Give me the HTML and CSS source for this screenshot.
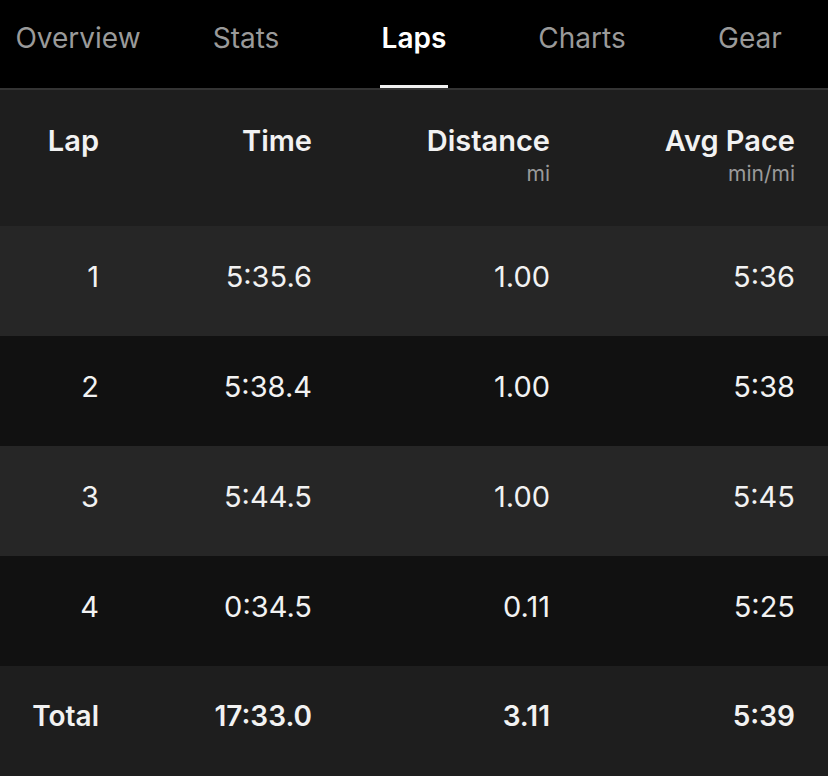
FILE: index.html
```html
<!DOCTYPE html>
<html>
<head>
<meta charset="utf-8">
<link rel="stylesheet" href="styles.css">
</head>
<body>
<nav class="tabs">
  <div class="tab">Overview</div>
  <div class="tab">Stats</div>
  <div class="tab active"><span class="tab-label">Laps</span></div>
  <div class="tab">Charts</div>
  <div class="tab">Gear</div>
</nav>
<div class="table">
  <div class="row head">
    <div class="cell"><span class="title">Lap</span></div>
    <div class="cell"><span class="title">Time</span></div>
    <div class="cell"><span class="title">Distance</span><span class="unit">mi</span></div>
    <div class="cell"><span class="title">Avg Pace</span><span class="unit">min/mi</span></div>
  </div>
  <div class="row odd">
    <div class="cell">1</div><div class="cell">5:35.6</div><div class="cell">1.00</div><div class="cell">5:36</div>
  </div>
  <div class="row even">
    <div class="cell">2</div><div class="cell">5:38.4</div><div class="cell">1.00</div><div class="cell">5:38</div>
  </div>
  <div class="row odd">
    <div class="cell">3</div><div class="cell">5:44.5</div><div class="cell">1.00</div><div class="cell">5:45</div>
  </div>
  <div class="row even">
    <div class="cell">4</div><div class="cell">0:34.5</div><div class="cell">0.11</div><div class="cell">5:25</div>
  </div>
  <div class="row total">
    <div class="cell">Total</div><div class="cell">17:33.0</div><div class="cell">3.11</div><div class="cell">5:39</div>
  </div>
</div>
</body>
</html>
```
FILE: styles.css
```css
html, body {
  margin: 0;
  padding: 0;
  background: #1e1e1e;
  font-family: Inter, "Noto Sans", "Liberation Sans", sans-serif;
  color: #f2f2f2;
}
.tabs {
  display: flex;
  justify-content: center;
  overflow: hidden;
  height: 88px;
  background: #000;
  border-bottom: 2px solid #343434;
}
.tab {
  flex: 0 0 168px;
  display: flex;
  justify-content: center;
  align-items: flex-start;
  padding-top: 21px;
  font-size: 28px;
  color: #9a9a9a;
}
.tab.active {
  color: #fff;
  font-weight: 600;
}
.tab-label {
  display: block;
  height: 67px;
  padding: 0 2px;
  box-sizing: border-box;
  border-bottom: 3px solid #f2f2f2;
}
.table {
  display: flex;
  flex-direction: column;
}
.row {
  display: grid;
  grid-template-columns: 99px 213px 238px 245px;
  padding-right: 33px;
  height: 110px;
  align-items: center;
  font-size: 29px;
}
.row .cell {
  text-align: right;
  padding-bottom: 10px;
}
.row.head {
  height: 136px;
  align-items: start;
}
.row.head .cell {
  display: flex;
  flex-direction: column;
  align-items: flex-end;
  padding-top: 33px;
}
.title {
  font-size: 29px;
  font-weight: 600;
  line-height: 36px;
}
.unit {
  margin-top: 3px;
  font-size: 21px;
  color: #9a9a9a;
  line-height: 24px;
}
.row.odd { background: #262626; }
.row.even { background: #111111; }
.row.total {
  background: #1e1e1e;
  font-weight: 600;
  font-size: 28px;
}
```
